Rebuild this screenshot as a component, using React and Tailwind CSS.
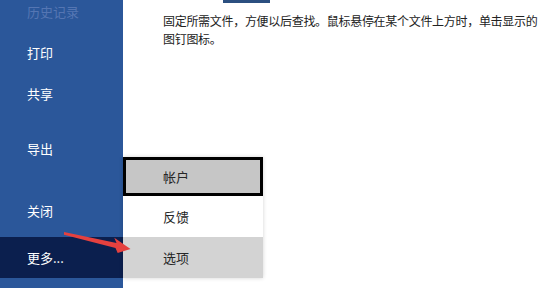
const FONT = { fontFamily: '"Microsoft YaHei", "Noto Sans CJK SC", "Noto Sans", sans-serif' }

const NAV = [
  { label: '历史记录', cls: 'h-6 text-[#5576b3]' },
  { label: '打印', cls: 'h-10 mt-[9px] text-white' },
  { label: '共享', cls: 'h-10 mt-px text-white' },
  { label: '导出', cls: 'h-10 mt-[15px] text-white' },
  { label: '关闭', cls: 'h-10 mt-[22px] text-white' },
]

function Arrow() {
  return (
    <svg className="absolute left-0 top-0 pointer-events-none" width="547" height="288">
      <polygon
        points="64,232 116.5,243 114.3,237.8 130.5,249 117.7,253 115.5,248 64,234.8"
        fill="#e5413f"
      />
    </svg>
  )
}

export default function App() {
  return (
    <div className="relative w-[547px] h-[288px] overflow-hidden bg-white flex" style={FONT}>
      <div className="w-[123px] h-full bg-[#2b579a] flex flex-col shrink-0">
        {NAV.map(n => (
          <div key={n.label} className={`flex items-center pl-[27px] text-[13px] ${n.cls}`}>{n.label}</div>
        ))}
        <div className="h-[41px] mt-[6px] bg-[#0b1f4e] flex items-center pl-[27px] text-[13px] text-white">更多...</div>
      </div>

      <div className="flex-1 min-w-0 relative">
        <div className="ml-[100px] w-[47px] h-[3px] bg-[#2b4f80]" />
        <div className="ml-[40px] mt-[9px] text-[12px] leading-[18px] tracking-[-0.3px] text-[#222] whitespace-nowrap">
          <div>固定所需文件，方便以后查找。鼠标悬停在某个文件上方时，单击显示的</div>
          <div>图钉图标。</div>
        </div>
      </div>

      <div className="absolute left-[123px] top-[157px] w-[140px] bg-white shadow-[0_0_4px_rgba(0,0,0,0.18)] text-[13px] text-[#262626]">
        <div className="h-[39px] border-[3px] border-black bg-[#c6c6c6] flex items-center pl-[37px]">帐户</div>
        <div className="h-[41px] flex items-center pl-[40px]">反馈</div>
        <div className="h-[41px] bg-[#d3d3d3] flex items-center pl-[40px]">选项</div>
      </div>

      <Arrow />
    </div>
  )
}
